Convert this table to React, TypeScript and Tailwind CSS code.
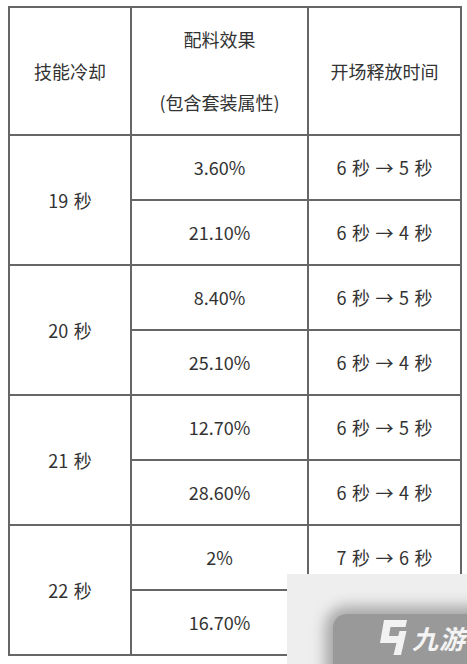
const font = { fontFamily: '"Noto Sans CJK SC", "Noto Sans", sans-serif' };

const groups = [
  { cd: "19 秒", rows: [["3.60%", "6 秒 → 5 秒"], ["21.10%", "6 秒 → 4 秒"]] },
  { cd: "20 秒", rows: [["8.40%", "6 秒 → 5 秒"], ["25.10%", "6 秒 → 4 秒"]] },
  { cd: "21 秒", rows: [["12.70%", "6 秒 → 5 秒"], ["28.60%", "6 秒 → 4 秒"]] },
  { cd: "22 秒", rows: [["2%", "7 秒 → 6 秒"], ["16.70%", "6 秒 → 4 秒"]] },
];

const Cell = ({ children, className = "" }: { children: React.ReactNode; className?: string }) => (
  <div className={`bg-white flex items-center justify-center text-[18px] text-[#333] [word-spacing:1.5px] ${className}`}>
    {children}
  </div>
);

// blurred "九游" watermark in the bottom-right corner
const Watermark = () => (
  <div className="absolute left-[287px] top-[574px] w-[180px] h-[90px] overflow-hidden bg-[#eeeeee]">
    <div className="absolute left-[46px] top-[40px] w-[200px] h-[110px] rounded-[14px] bg-[#999999] shadow-[0_0_14px_8px_#a8a8a8]"></div>
    <div className="absolute left-[93px] top-[46px] flex items-center gap-[5px]">
      <svg width="27" height="35" viewBox="0 0 27 35">
        <polygon points="4,0 27,0 25.5,7 10.5,7 9,16 19,16 17.5,23 0,23" fill="#f2f2f2" />
        <polygon points="19.5,11 26.5,11 21,35 13.5,35" fill="#f2f2f2" />
      </svg>
      <span className="text-[26px] font-bold italic text-[#f4f4f4] leading-none tracking-[1px] [word-spacing:0px]">九游</span>
    </div>
  </div>
);

export default function App() {
  return (
    <div className="relative w-[467px] h-[664px] bg-white overflow-hidden" style={font}>
      <div className="ml-[8px] mt-[6px] w-[454px] p-[2px] bg-[#666] grid grid-cols-[120px_175px_151px] grid-rows-[126px_repeat(8,63px)] gap-[2px]">
        <Cell>技能冷却</Cell>
        <Cell className="flex-col gap-[38px]">
          <span className="leading-[25px]">配料效果</span>
          <span className="leading-[25px]">(包含套装属性)</span>
        </Cell>
        <Cell>开场释放时间</Cell>
        {groups.map((g) => (
          <>
            <Cell key={g.cd} className="row-span-2">{g.cd}</Cell>
            <Cell>{g.rows[0][0]}</Cell>
            <Cell>{g.rows[0][1]}</Cell>
            <Cell className="col-start-2">{g.rows[1][0]}</Cell>
            <Cell>{g.rows[1][1]}</Cell>
          </>
        ))}
      </div>
      <Watermark />
    </div>
  );
}
